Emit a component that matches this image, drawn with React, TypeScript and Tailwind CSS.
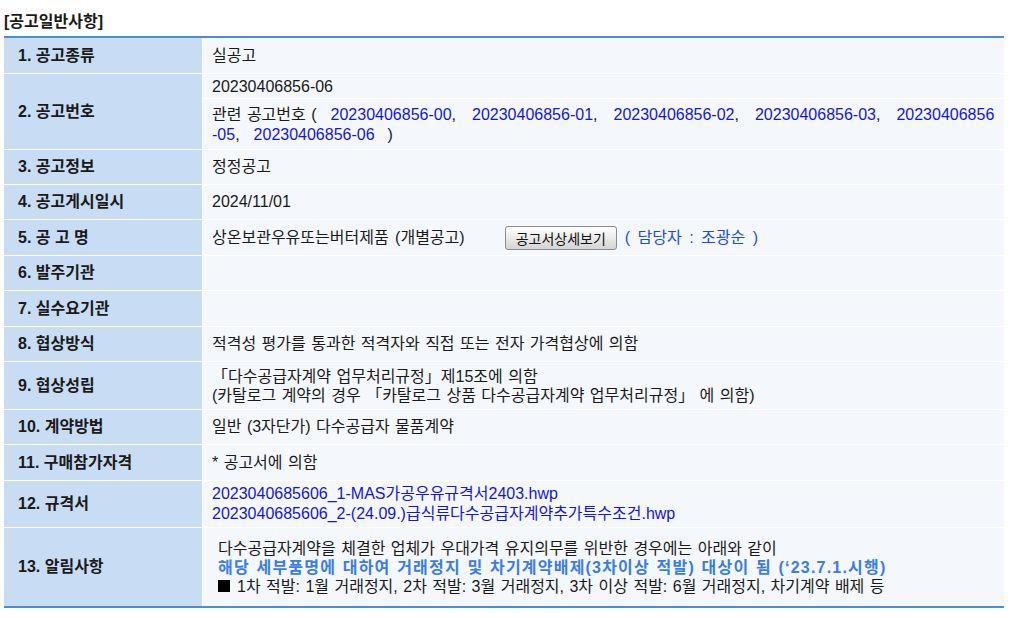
import React from "react";

const V = "font-['Liberation_Sans','Noto_Sans_CJK_KR',sans-serif] text-[16px] text-[#1a1a1a] [word-spacing:1px]";
const LB = "font-['Liberation_Sans','Noto_Sans_CJK_KR',sans-serif] font-bold text-[16px] text-[#1a1a1a]";

function Row({ label, h, children, indent = false }: { label: string; h: string; children?: React.ReactNode; indent?: boolean }) {
  return (
    <div className={`flex ${h}`}>
      <div className={`w-[198px] shrink-0 bg-[#c8dcf4] flex items-center pl-[14px] ${LB}`}>
        {label}
      </div>
      <div className={`flex-1 ml-px bg-[#f4f7fc] flex flex-col justify-center ${indent ? "pl-[15px]" : "pl-[9px]"} ${V} leading-[20px]`}>
        {children}
      </div>
    </div>
  );
}

const L = "text-[#1616d8]";

export default function App() {
  const nums = ["00", "01", "02", "03"];
  return (
    <div className="w-[1022px] h-[618px] bg-white pl-[4px]">
      <div className={`h-[36px] pt-[11px] leading-[22px] ${LB}`}>
        [공고일반사항]
      </div>
      <div className="w-[1000px] border-t-2 border-b-2 border-[#4a8fd6] flex flex-col gap-px bg-white">
        <Row label="1. 공고종류" h="h-[35px]">실공고</Row>
        <div className="flex h-[75px]">
          <div className={`w-[198px] shrink-0 bg-[#c8dcf4] flex items-center pl-[14px] ${LB}`}>
            2. 공고번호
          </div>
          <div className="flex-1 ml-px flex flex-col gap-px">
            <div className={`h-[24px] bg-[#f4f7fc] flex items-center pl-[9px] pt-[2px] ${V}`}>20230406856-06</div>
            <div className={`flex-1 bg-[#f4f7fc] flex flex-col justify-center pl-[9px] pt-[2px] ${V} leading-[20px]`}>
              <div className="whitespace-nowrap">
                관련 공고번호 (<span className="inline-block w-[14px]" />
                {nums.map((n) => (
                  <span key={n}>
                    <span className={L}>20230406856-{n}</span>,<span className="inline-block w-[16px]" />
                  </span>
                ))}
                <span className={L}>20230406856</span>
              </div>
              <div className="whitespace-nowrap">
                <span className={L}>-05</span>,<span className="inline-block w-[14px]" />
                <span className={L}>20230406856-06</span>
                <span className="inline-block w-[13px]" />)
              </div>
            </div>
          </div>
        </div>
        <Row label="3. 공고정보" h="h-[34px]">정정공고</Row>
        <Row label="4. 공고게시일시" h="h-[34px]">2024/11/01</Row>
        <Row label="5. 공 고 명" h="h-[35px]">
          <div className="flex items-center whitespace-nowrap">
            <span className="[word-spacing:2px]">상온보관우유또는버터제품 (개별공고)</span>
            <button className="ml-[40px] h-[24px] px-[10px] rounded-[3px] border border-[#8c8c8c] bg-gradient-to-b from-[#ffffff] to-[#d4d4d4] font-['Noto_Sans_CJK_KR',sans-serif] text-[14px] leading-[20px] text-[#111] shadow-[inset_0_1px_0_#fff]">
              공고서상세보기
            </button>
            <span className="ml-[8px] text-[#1d4fd6] [word-spacing:3px]">( 담당자 : 조광순 )</span>
          </div>
        </Row>
        <Row label="6. 발주기관" h="h-[34px]" />
        <Row label="7. 실수요기관" h="h-[35px]" />
        <Row label="8. 협상방식" h="h-[34px]">적격성 평가를 통과한 적격자와 직접 또는 전자 가격협상에 의함</Row>
        <Row label="9. 협상성립" h="h-[47px]">
          <div className="leading-[19px]">「다수공급자계약 업무처리규정」제15조에 의함</div>
          <div className="leading-[19px]">(카탈로그 계약의 경우 「카탈로그 상품 다수공급자계약 업무처리규정」 에 의함)</div>
        </Row>
        <Row label="10. 계약방법" h="h-[34px]">일반 (3자단가) 다수공급자 물품계약</Row>
        <Row label="11. 구매참가자격" h="h-[35px]">* 공고서에 의함</Row>
        <Row label="12. 규격서" h="h-[46px]">
          <div className={L}>2023040685606_1-MAS가공우유규격서2403.hwp</div>
          <div className={L}>2023040685606_2-(24.09.)급식류다수공급자계약추가특수조건.hwp</div>
        </Row>
        <Row label="13. 알림사항" h="h-[78px]" indent>
          <div className="leading-[19px]">다수공급자계약을 체결한 업체가 우대가격 유지의무를 위반한 경우에는 아래와 같이</div>
          <div className="leading-[19px] font-bold text-[#3b7ee3] tracking-[1.2px]">해당 세부품명에 대하여 거래정지 및 차기계약배제(3차이상 적발) 대상이 됨 (‘23.7.1.시행)</div>
          <div className="leading-[19px] flex items-center">
            <span className="inline-block w-[12px] h-[12px] bg-black mr-[7px] shrink-0" />
            <span>1차 적발: 1월 거래정지, 2차 적발: 3월 거래정지, 3차 이상 적발: 6월 거래정지, 차기계약 배제 등</span>
          </div>
        </Row>
      </div>
    </div>
  );
}
